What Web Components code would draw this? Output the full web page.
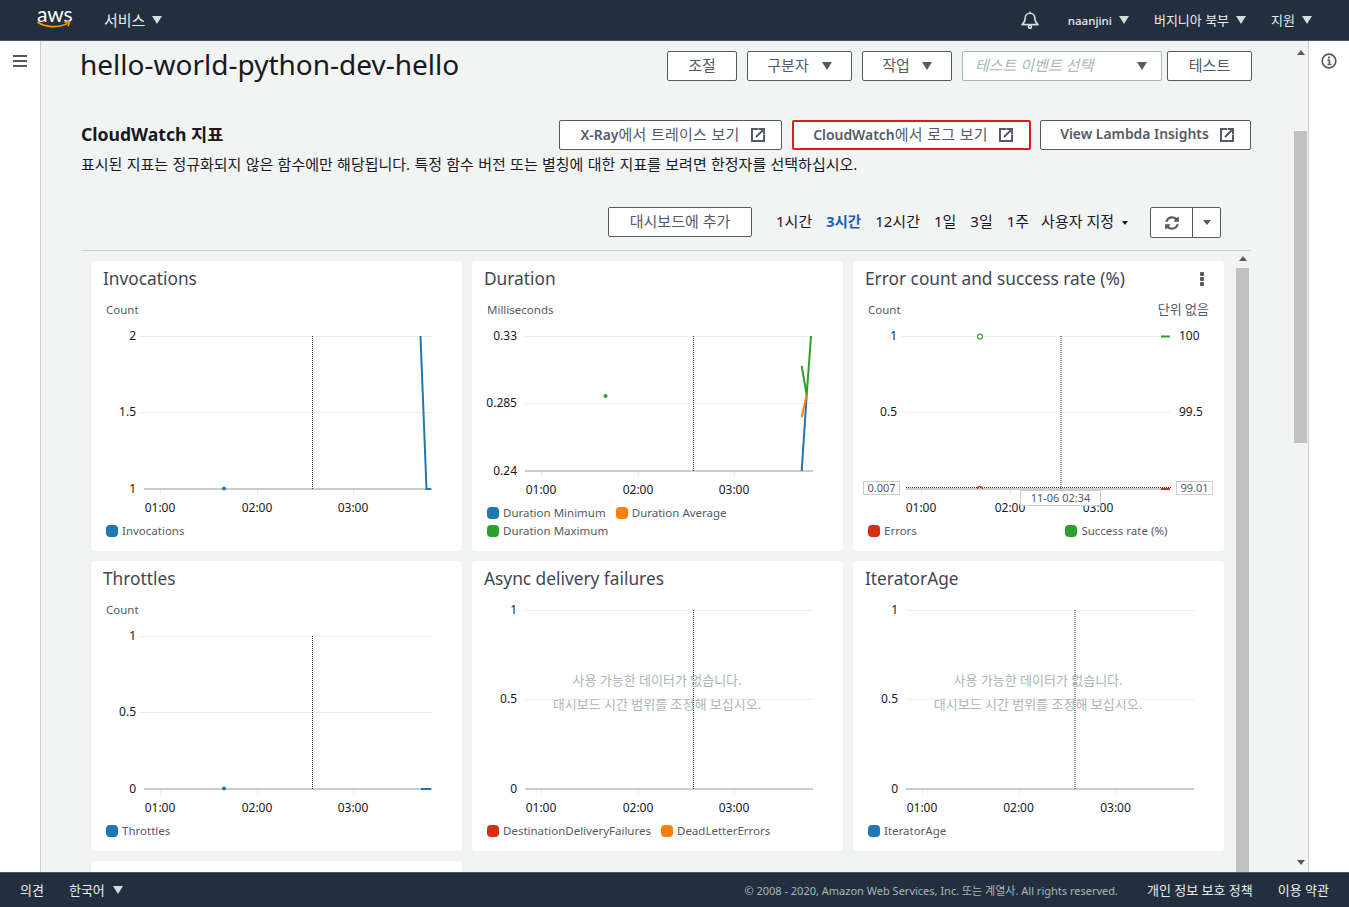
<!DOCTYPE html>
<html lang="ko">
<head>
<meta charset="utf-8">
<title>hello-world-python-dev-hello</title>
<style>
html, body { margin: 0; height: 100%; overflow: hidden; }
body {
  display: flex; flex-direction: column; height: 907px;
  font-family: "Noto Sans", "Noto Sans CJK KR", sans-serif;
  font-size: 14px; color: #16191f; background: #f2f3f3;
}
</style>
</head>
<body>
<aws-topbar></aws-topbar>
<console-body>
  <left-rail slot="left"></left-rail>
  <function-header></function-header>
  <metrics-section></metrics-section>
  <right-rail slot="right"></right-rail>
</console-body>
<aws-footer></aws-footer>

<script>
const ICONS = {
  external: `<svg width="14" height="14" viewBox="0 0 14 14" fill="none" stroke="#545b64" stroke-width="2"><path d="M7 1H1v12h12V7"/><path d="M5 9l7-7M7.5 1H13v5.5" /></svg>`,
  refresh: `<svg width="16" height="16" viewBox="0 0 1792 1792" fill="#545b64"><path d="M1639 1056q0 5-1 7-64 268-268 434.5t-478 166.5q-146 0-282.5-55t-243.5-157l-129 129q-19 19-45 19t-45-19-19-45v-448q0-26 19-45t45-19h448q26 0 45 19t19 45-19 45l-137 137q71 66 161 102t187 36q134 0 250-65t186-179q11-17 53-117 8-23 30-23h192q13 0 22.5 9.5t9.5 22.5zm25-800v448q0 26-19 45t-45 19h-448q-26 0-45-19t-19-45 19-45l138-138q-148-137-349-137-134 0-250 65t-186 179q-11 17-53 117-8 23-30 23h-199q-13 0-22.5-9.5t-9.5-22.5v-7q65-268 270-434.5t480-166.5q146 0 284 55.5t245 156.5l130-129q19-19 45-19t45 19 19 45z"/></svg>`,
  bell: `<svg width="18" height="18" viewBox="0 0 18 18" fill="none" stroke="#d5dbdb" stroke-width="1.6" style="display:block"><path d="M1 13.6c2.6-2 3.2-4 3.2-6.6a4.8 4.8 0 0 1 9.6 0c0 2.6.6 4.6 3.2 6.6z" stroke-linejoin="round"/><circle cx="9" cy="15.8" r="1.5"/><path d="M9 .4v1.8"/></svg>`,
  smile: `<svg width="34" height="8" viewBox="0 0 34 8" fill="none" stroke="#f90" stroke-width="1.6" style="display:block"><path d="M0.5 1c8 5.6 21 6.2 30 1.4"/><path d="M27.5 1.2l5-.6-1.4 4.6"/></svg>`,
  info: `<svg width="16" height="16" viewBox="0 0 16 16" fill="none" stroke="#545b64" style="display:block"><circle cx="8" cy="8" r="6.8" stroke-width="1.7"/><path d="M6.4 7.2H8.4V11.5M6.4 11.5h3.9" stroke-width="1.6"/><circle cx="8" cy="4.7" r="1.1" fill="#545b64" stroke="none"/></svg>`
};

const CARET = `<i style="display:block;flex:none;width:0;height:0;border-left:5px solid transparent;border-right:5px solid transparent;border-top:8px solid currentColor"></i>`;
const CARET_BTN = `<i style="display:block;flex:none;margin-top:3px;width:0;height:0;border-left:5px solid transparent;border-right:5px solid transparent;border-top:8px solid currentColor"></i>`;

// small helper, every element is just a shadow root from a string
function define(name, html) {
  customElements.define(name, class extends HTMLElement {
    constructor() {
      super();
      this.attachShadow({ mode: 'open' }).innerHTML = html;
    }
  });
}

define('aws-topbar', `
<style>
:host { display: flex; align-items: center; height: 40px; flex: none; background: #232f3e; border-bottom: 1px solid #4a5564; color: #eaeded; font-size: 13px; }
.logo { margin-left: 37px; width: 34px; height: 30px; color: #fff; }
.logo b { display: block; font: 400 21px/16px Lato, sans-serif; letter-spacing: -.1px; margin-top: 1px; height: 15px; }
.svc { margin-left: 33px; display: flex; align-items: center; gap: 7px; font-size: 15px; }
.r { display: flex; align-items: center; gap: 7px; }
.svc i, .r i { color: #d5dbdb; }
span { margin-bottom: 2px; }
.user { font-size: 11.5px; font-weight: 500; }
.bell { margin-left: auto; height: 18px; }
</style>
<div class="logo"><b>aws</b>${ICONS.smile}</div>
<div class="svc"><span>서비스</span> ${CARET}</div>
<div class="bell">${ICONS.bell}</div>
<div class="r user" style="margin-left:29px">naanjini ${CARET}</div>
<div class="r" style="margin-left:25px"><span>버지니아 북부</span> ${CARET}</div>
<div class="r" style="margin-left:25px;margin-right:37px"><span>지원</span> ${CARET}</div>
`);

define('aws-footer', `
<style>
:host { display: flex; align-items: center; height: 34px; flex: none; background: #232f3e; border-top: 1px solid #4a5564; color: #eaeded; font-size: 13px; }
span { margin-bottom: 2px; }
.lang { margin-left: 25px; display: flex; align-items: center; gap: 8px; margin-bottom: 0; }
.lang i { color: #d5dbdb; }
.copy { margin-left: auto; color: #aab7b8; font-size: 11px; margin-bottom: 0; }
</style>
<span style="margin-left:20px">의견</span>
<div class="lang"><span>한국어</span> ${CARET}</div>
<span class="copy">© 2008 - 2020, Amazon Web Services, Inc. 또는 계열사. All rights reserved.</span>
<span style="margin-left:29px">개인 정보 보호 정책</span>
<span style="margin-left:25px;margin-right:20px">이용 약관</span>
`);

define('console-body', `
<style>
:host { display: flex; flex: 1; min-height: 0; overflow: hidden; }
main { flex: 1; min-width: 0; display: flex; flex-direction: column; padding: 10px 43px 0 40px; overflow: hidden; }
</style>
<slot name="left"></slot>
<main><slot></slot></main>
<scroll-bar style="--up:9px; --thumb-top:76px; --thumb-h:312px; --down:7px; margin-right:1px"></scroll-bar>
<slot name="right"></slot>
`);

define('left-rail', `
<style>
:host { display: block; flex: none; width: 40px; background: #fff; border-right: 1px solid #ccc; padding-top: 14px; }
div { width: 14px; height: 2px; background: #545b64; margin: 0 0 3px 13px; }
</style>
<div></div><div></div><div></div>
`);

define('right-rail', `
<style>
:host { display: block; flex: none; width: 41px; background: #fff; border-left: 1px solid #ccc; padding: 12px 0 0 12px; box-sizing: border-box; }
</style>
${ICONS.info}
`);

define('scroll-bar', `
<style>
:host { display: flex; flex-direction: column; align-items: center; flex: none; width: 13px; }
.up { margin-top: var(--up, 0); width: 0; height: 0; border: 4px solid transparent; border-top: 0; border-bottom: 5px solid #545b64; }
.thumb { width: 13px; margin-top: var(--thumb-top, 3px); height: var(--thumb-h, auto); flex: none; background: #c1c1c1; }
.down { margin-top: auto; margin-bottom: var(--down, 0); width: 0; height: 0; border: 4px solid transparent; border-bottom: 0; border-top: 5px solid #545b64; display: var(--down-display, block); }
</style>
<div class="up"></div><div class="thumb"></div><div class="down"></div>
`);

define('aws-btn', `
<style>
:host { display: inline-flex; align-items: center; justify-content: center; gap: 11px; box-sizing: border-box; height: 30px; padding-bottom: 3px; flex: none; background: #fff; border: 1px solid #545b64; border-radius: 2px; color: #545b64; font-size: 15px; white-space: nowrap; }
::slotted(svg) { margin-top: 3px; }
</style>
<slot></slot>
`);

define('function-header', `
<style>
:host { display: flex; align-items: center; flex: none; height: 30px; }
h1 { margin: -4px 0 0 -1px; flex: 1; font-size: 28px; font-weight: 400; line-height: 30px; color: #16191f; white-space: nowrap; }
.btns { display: flex; gap: 10px; margin-right: -1px; }
.sel { display: flex; align-items: center; justify-content: space-between; box-sizing: border-box; width: 200px; height: 30px; padding: 0 14px 3px 12px; background: #fff; border: 1px solid #aab7b8; border-radius: 2px; color: #aab7b8; font-size: 15px; font-style: italic; }
.sel i { color: #545b64; }
</style>
<h1>hello-world-python-dev-hello</h1>
<div class="btns">
  <aws-btn style="width:70px">조절</aws-btn>
  <aws-btn style="width:105px;gap:13px">구분자 ${CARET_BTN}</aws-btn>
  <aws-btn style="width:90px;gap:12px">작업 ${CARET_BTN}</aws-btn>
  <div class="sel" style="margin-right:-5px">테스트 이벤트 선택 ${CARET_BTN}</div>
  <aws-btn style="width:85px">테스트</aws-btn>
</div>
`);

define('metrics-section', `
<style>
:host { display: flex; flex-direction: column; flex: 1; min-height: 0; margin-top: 39px; }
.head { display: flex; align-items: center; height: 30px; flex: none; }
h2 { margin: 0; padding-bottom: 4px; flex: 1; font-size: 17.6px; font-weight: 700; color: #16191f; }
.links { display: flex; gap: 10px; }
.links span { letter-spacing: .2px; word-spacing: .5px; }
.links b { font-weight: 600; font-size: 13.9px; letter-spacing: 0; }
.red { border: 2px solid #e8141f; }
p { margin: 4px 0 0; line-height: 20px; font-size: 15px; word-spacing: .4px; color: #16191f; flex: none; white-space: nowrap; }
.tools { display: flex; align-items: flex-start; flex: none; height: 31px; margin-top: 33px; padding-left: 527px; }
.range { display: flex; align-items: center; height: 30px; margin-left: 24px; padding-bottom: 3px; box-sizing: border-box; color: #16191f; font-size: 15px; white-space: nowrap; }
.range a { margin-right: 14px; }
.range a.on { color: #1a5fb4; font-weight: 700; font-size: 14.5px; }
.dd { display: inline-flex; align-items: center; gap: 8px; margin-left: -2px; }
.dd i { display: block; margin-top: 5px; width: 0; height: 0; border: 3px solid transparent; border-bottom: 0; border-top: 4px solid #16191f; }
.group { display: flex; box-sizing: border-box; width: 71px; height: 31px; margin-left: 22px; background: #fff; border: 1px solid #545b64; border-radius: 2px; }
.group div { display: flex; align-items: center; justify-content: center; }
.group .a { width: 41px; border-right: 1px solid #545b64; }
.group .b { flex: 1; }
.group .b i { display: block; width: 0; height: 0; border: 4px solid transparent; border-bottom: 0; border-top: 5px solid #545b64; }
hr { flex: none; margin: 12px 0 0; border: 0; height: 1px; background: #ccc; }
.dash { display: flex; flex: 1; min-height: 0; margin-top: 5px; padding-left: 10px; overflow: hidden; }
.grid { display: grid; grid-template-columns: repeat(3, 371px); grid-auto-rows: 290px; gap: 10px; flex: none; margin-top: 5px; }
</style>
<div class="head">
  <h2>CloudWatch 지표</h2>
  <div class="links">
    <aws-btn style="width:223px;padding-left:4px"><span><b>X-Ray</b>에서 트레이스 보기</span> ${ICONS.external}</aws-btn>
    <aws-btn class="red" style="width:239px;padding-left:3px"><span><b>CloudWatch</b>에서 로그 보기</span> ${ICONS.external}</aws-btn>
    <aws-btn style="width:211px;margin-left:-1px;padding-left:3px"><b>View Lambda Insights</b> ${ICONS.external}</aws-btn>
  </div>
</div>
<p>표시된 지표는 정규화되지 않은 함수에만 해당됩니다. 특정 함수 버전 또는 별칭에 대한 지표를 보려면 한정자를 선택하십시오.</p>
<div class="tools">
  <aws-btn style="width:144px">대시보드에 추가</aws-btn>
  <div class="range">
    <a>1시간</a><a class="on">3시간</a><a>12시간</a><a>1일</a><a>3일</a><a>1주</a>
    <span class="dd">사용자 지정 <i></i></span>
  </div>
  <div class="group"><div class="a">${ICONS.refresh}</div><div class="b"><i></i></div></div>
</div>
<hr>
<div class="dash">
  <div class="grid">
    <metric-card chart="invocations">Invocations</metric-card>
    <metric-card chart="duration">Duration</metric-card>
    <metric-card chart="errors">Error count and success rate (%)</metric-card>
    <metric-card chart="throttles">Throttles</metric-card>
    <metric-card chart="async">Async delivery failures</metric-card>
    <metric-card chart="iterator">IteratorAge</metric-card>
    <metric-card></metric-card>
  </div>
  <scroll-bar style="--thumb-top:7px; --thumb-h:640px; --down-display:none; margin-left:12px"></scroll-bar>
</div>
`);

// chart coordinates are relative to the card's top left corner
const BLUE = '#1f77b4', ORANGE = '#ff7f0e', GREEN = '#2ca02c', RED = '#d13212';
const line = (pts, c, w = 2) => `<polyline points="${pts}" fill="none" stroke="${c}" stroke-width="${w}"/>`;
const box = (x, y, w, h, t, fs = 11) => `<rect x="${x + .5}" y="${y + .5}" width="${w}" height="${h}" fill="#fff" stroke="#ccc"/><text x="${x + w / 2 + .5}" y="${y + h / 2 + 4.5}" text-anchor="middle" font-size="${fs}" fill="#545b64">${t}</text>`;

const CHARTS = {
  invocations: {
    unit: 'Count', legend: [['Invocations', BLUE]],
    ys: [['2', 75], ['1.5', 151], ['1', 228]], labelX: 45, grid: [48, 341], axis: [53, 341],
    xs: [69, 166, 262], dotted: 221,
    data: `<circle cx="133" cy="227.5" r="2" fill="${BLUE}"/>` + line('329.5,75 335.5,228 340,228', BLUE)
  },
  duration: {
    unit: 'Milliseconds', legend: [['Duration Minimum', BLUE], ['Duration Average', ORANGE], ['Duration Maximum', GREEN]],
    ys: [['0.33', 75], ['0.285', 142], ['0.24', 210]], labelX: 45, grid: [53, 341], axis: [53, 341],
    xs: [69, 166, 262], dotted: 221,
    data: `<circle cx="133.5" cy="135" r="2" fill="${GREEN}"/>` + line('329.7,210 334.7,134', BLUE) + line('329.7,156 334.7,134', ORANGE) + line('329.7,105 334.7,134 339,75', GREEN)
  },
  errors: {
    unit: 'Count', unitRight: '단위 없음', kebab: true, legend: [['Errors', RED], ['Success rate (%)', GREEN]], legendGap: 148.5,
    ys: [['1', 75], ['0.5', 151]], labelX: 44, grid: [49, 317], axis: [53, 317],
    xs: [68, 157, 245], dotted: 207.5, right: [['100', 75], ['99.5', 151]], rightX: 326,
    data: `<circle cx="127" cy="75.5" r="2.5" fill="#fff" stroke="${GREEN}" stroke-width="1.2"/>` + line('308,75.5 317,75.5', GREEN),
    over: `<line x1="53" x2="318" y1="226.5" y2="226.5" stroke="#333" stroke-dasharray="1 1"/>`
      + `<path d="M124.4 228a2.6 2.6 0 0 1 5.2 0" fill="none" stroke="${RED}" stroke-width="1.2"/>` + line('308,228 317,228', RED)
      + box(10, 220, 36, 13, '0.007') + box(323, 220, 36, 13, '99.01') + box(167, 229, 80, 15, '11-06 02:34')
  },
  throttles: {
    unit: 'Count', legend: [['Throttles', BLUE]],
    ys: [['1', 75], ['0.5', 151], ['0', 228]], labelX: 45, grid: [48, 341], axis: [53, 341],
    xs: [69, 166, 262], dotted: 221,
    data: `<circle cx="133" cy="227.5" r="2" fill="${BLUE}"/>` + line('330,228 340,228', BLUE)
  },
  async: {
    empty: 185, legend: [['DestinationDeliveryFailures', RED], ['DeadLetterErrors', ORANGE]],
    ys: [['1', 49], ['0.5', 138], ['0', 228]], labelX: 45, grid: [53, 341], axis: [53, 341],
    xs: [69, 166, 262], dotted: 221, data: ''
  },
  iterator: {
    empty: 185, legend: [['IteratorAge', BLUE]],
    ys: [['1', 49], ['0.5', 138], ['0', 228]], labelX: 45, grid: [53, 341], axis: [53, 341],
    xs: [69, 165.5, 262.5], dotted: 221.5, data: ''
  }
};

class MetricCard extends HTMLElement {
  constructor() {
    super();
    this.attachShadow({ mode: 'open' });
  }

  connectedCallback() {
    const c = CHARTS[this.getAttribute('chart')];
    let body = '';
    if (c) {
      const top = c.unit ? 58 : 36;
      const ax = c.right ? 228 : c.ys[c.ys.length - 1][1];
      let s = '';
      for (const [t, y] of c.ys) {
        if (y !== ax) s += `<line x1="${c.grid[0]}" x2="${c.grid[1]}" y1="${y + .5}" y2="${y + .5}" stroke="#eaeded"/>`;
        s += `<text x="${c.labelX}" y="${y + 3.5}" text-anchor="end">${t}</text>`;
      }
      for (const [t, y] of c.right || []) {
        s += `<text x="${c.rightX}" y="${y + 3.5}">${t}</text>`;
      }
      for (const x of c.xs) {
        s += `<line x1="${x + .5}" x2="${x + .5}" y1="${ax}" y2="${ax + 6}" stroke="#eaeded"/>`;
      }
      c.xs.forEach((x, i) => { s += `<text x="${x}" y="${ax + 23}" text-anchor="middle">0${i + 1}:00</text>`; });
      s += `<line x1="${c.axis[0]}" x2="${c.axis[1]}" y1="${ax}" y2="${ax}" stroke="#ccc" stroke-width="2"/>`;
      s += `<line x1="${c.dotted + .5}" x2="${c.dotted + .5}" y1="${c.ys[0][1]}" y2="${ax}" stroke="#333" stroke-dasharray="1 1"/>`;
      if (c.empty) {
        s += `<g text-anchor="middle" font-size="13" fill="#aab7b8"><text x="${c.empty}" y="124">사용 가능한 데이터가 없습니다.</text><text x="${c.empty}" y="148">대시보드 시간 범위를 조정해 보십시오.</text></g>`;
      }
      s += c.data + (c.over || '');
      const legend = c.legend.map(([t, col]) => `<span class="item"><i style="background:${col}"></i>${t}</span>`).join('');
      body = `
        ${c.unit ? `<div class="unit"><span>${c.unit}</span><span class="ko">${c.unitRight || ''}</span></div>` : ''}
        <svg width="371" height="${228 - top}" viewBox="0 ${top} 371 ${228 - top}">${s}</svg>
        <div class="legend" style="column-gap:${c.legendGap || 10}px">${legend}</div>`;
    }
    const kebab = c && c.kebab ? `<svg width="4" height="14" viewBox="0 0 4 14" fill="#545b64"><rect width="4" height="4" rx="1"/><rect y="5" width="4" height="4" rx="1"/><rect y="10" width="4" height="4" rx="1"/></svg>` : '';
    this.shadowRoot.innerHTML = `
      <style>
      :host { display: flex; flex-direction: column; background: #fff; border-radius: 4px; box-shadow: 0 0 1px #eaeded; overflow: hidden; }
      .title { display: flex; align-items: center; justify-content: space-between; flex: none; height: 36px; padding: 0 20px 2px 12px; box-sizing: border-box; font-size: 17.3px; color: #414750; white-space: nowrap; }
      .unit { display: flex; justify-content: space-between; flex: none; height: 18px; line-height: 18px; margin-top: 4px; padding: 0 15px; font-size: 11.5px; color: #545b64; }
      .ko { font-size: 13px; margin-top: -1px; }
      svg { display: block; flex: none; overflow: visible; font-size: 12px; fill: #16191f; }
      .title svg { fill: #545b64; margin-top: 2px; }
      .legend { display: flex; flex-wrap: wrap; margin-top: auto; padding: 0 15px 11px; font-size: 11.5px; line-height: 18px; color: #545b64; position: relative; }
      .item { display: flex; align-items: center; gap: 4px; white-space: nowrap; }
      .item i { display: block; width: 12px; height: 12px; border-radius: 4px; }
      </style>
      <div class="title"><span><slot></slot></span>${kebab}</div>
      ${body}`;
  }
}
customElements.define('metric-card', MetricCard);
</script>
</body>
</html>
